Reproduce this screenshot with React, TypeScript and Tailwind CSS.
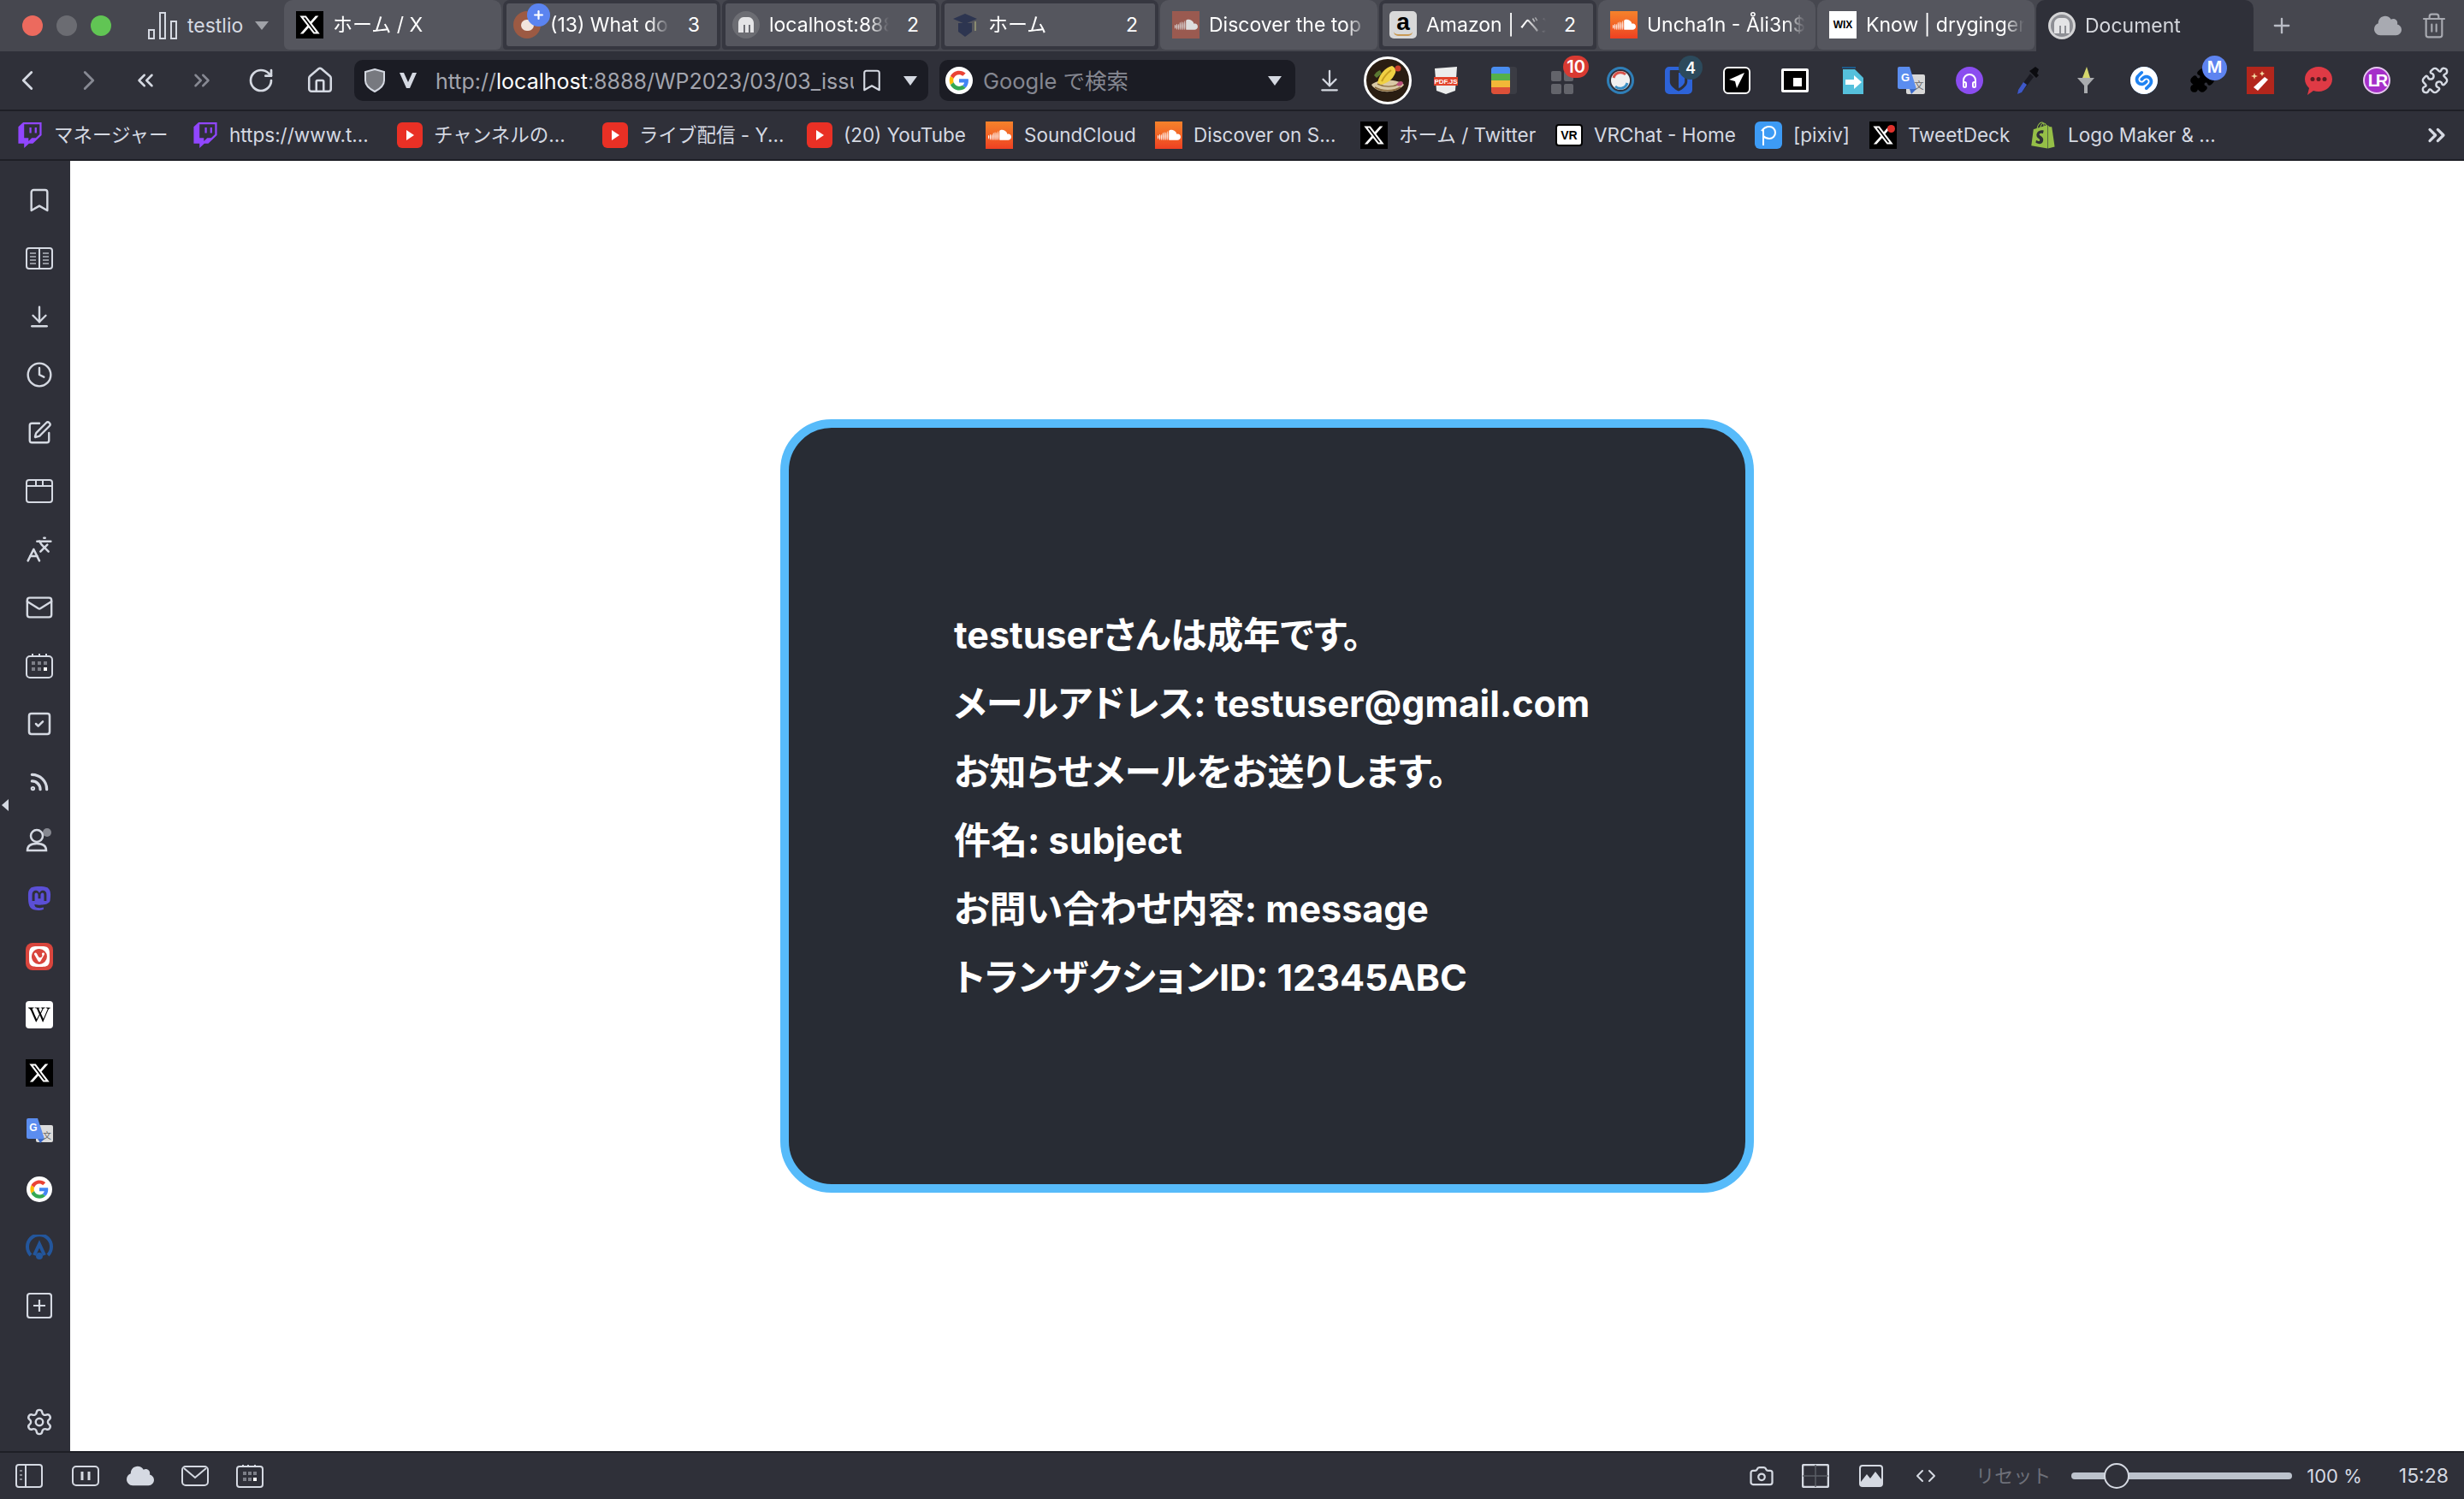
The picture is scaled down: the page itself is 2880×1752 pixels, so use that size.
import React from 'react';
import {
  ChevronLeft, ChevronRight, ChevronsLeft, ChevronsRight, RotateCw, House, Bookmark, Clock, Mail, Rss,
  Plus, Trash2, Puzzle, Settings, SquarePen, SquareCheck, Camera, Code, ChevronsRight as More, ArrowDownToLine, Languages,
} from 'lucide-react';
import { FaXTwitter, FaTwitch, FaSoundcloud, FaMastodon, FaWikipediaW, FaShopify, FaCloud } from 'react-icons/fa6';
import { SiShazam, SiVivaldi, SiBitwarden } from 'react-icons/si';

const G = ({ size = 32 }: { size?: number }) => (
  <svg width={size} height={size} viewBox="0 0 48 48">
    <circle cx="24" cy="24" r="24" fill="#fff" />
    <g transform="translate(7 7) scale(0.71)">
      <path fill="#EA4335" d="M24 9.5c3.5 0 6.7 1.2 9.2 3.6l6.9-6.9C35.9 2.4 30.5 0 24 0 14.6 0 6.5 5.4 2.6 13.2l8 6.2C12.5 13.7 17.800 9.500 24 9.500z" />
      <path fill="#4285F4" d="M47 24.500c0-1.600-.1-3.100-.4-4.500H24v9h12.900c-.6 3-2.200 5.500-4.700 7.200l7.700 6c4.500-4.200 7.100-10.300 7.100-17.700z" />
      <path fill="#FBBC05" d="M10.500 28.600c-.5-1.500-.8-3-.8-4.600s.3-3.100.8-4.600l-8-6.200C.9 16.400 0 20.100 0 24s.9 7.600 2.600 10.800l7.900-6.200z" />
      <path fill="#34A853" d="M24 48c6.500 0 11.900-2.100 15.900-5.800l-7.700-6c-2.200 1.400-4.900 2.300-8.200 2.300-6.200 0-11.500-4.200-13.400-9.900l-8 6.200C6.500 42.600 14.600 48 24 48z" />
    </g>
  </svg>
);

const XBox = ({ dot = false }: { dot?: boolean }) => (
  <div className="relative w-[32px] h-[32px] bg-black flex items-center justify-center shrink-0">
    <FaXTwitter size={26} color="#fff" />
    {dot && <div className="absolute top-[4px] right-[2px] w-[9px] h-[9px] rounded-full bg-[#e0312c]" />}
  </div>
);

const ScBox = ({ dim = false }: { dim?: boolean }) => (
  <div className={`w-[32px] h-[32px] flex items-center justify-center shrink-0 ${dim ? 'bg-[#9a5a50]' : 'bg-gradient-to-b from-[#f5822b] to-[#ee3f22]'}`}>
    <FaSoundcloud size={27} color={dim ? '#ddd' : '#fff'} />
  </div>
);

const YtBox = () => (
  <div className="w-[30px] h-[30px] rounded-[6px] bg-[#e93025] flex items-center justify-center shrink-0">
    <div className="w-0 h-0 border-y-[6px] border-y-transparent border-l-[9px] border-l-white" />
  </div>
);

const TwitchBox = () => <FaTwitch size={30} color="#9146ff" className="shrink-0" />;

const ElephantFav = ({ ring = false }: { ring?: boolean }) => (
  <div className={`w-[32px] h-[32px] rounded-full flex items-center justify-center shrink-0 ${ring ? 'bg-[#8d8e94] border-[3px] border-[#d4d4d6]' : 'bg-[#6c6d73]'}`}>
    <svg width="20" height="18" viewBox="0 0 20 18" fill="#e4e4e6">
      <path d="M1 18V7c0-4 3-7 6-7h6c3 0 6 3 6 7v11h-4V9h-2v9H9V9H7v9z" />
    </svg>
  </div>
);

const tabs = [
  { kind: 'single', title: 'ホーム / X', icon: <XBox /> },
  {
    kind: 'stack', title: '(13) What do', count: 3,
    icon: (
      <div className="relative w-[32px] h-[32px] shrink-0">
        <div className="absolute inset-0 rounded-full bg-[#9c5a43] flex items-center justify-center">
          <div className="w-[15px] h-[13px] rounded-full bg-[#f2e5dc]" />
        </div>
        <div className="absolute -top-[9px] left-[16px] w-[27px] h-[27px] rounded-full bg-[#5b84f0] flex items-center justify-center">
          <Plus size={15} color="#fff" strokeWidth={3.5} />
        </div>
      </div>
    ),
  },
  { kind: 'stack', title: 'localhost:888', count: 2, icon: <ElephantFav /> },
  {
    kind: 'stack', title: 'ホーム', count: 2,
    icon: (
      <svg width="32" height="32" viewBox="0 0 32 32" className="shrink-0">
        <path d="M2 9 16 3l14 6-14 6z" fill="#2d3550" />
        <path d="M8 14h16v10l-8 6-8-6z" fill="#2d3550" />
        <rect x="27" y="12" width="2" height="11" fill="#8a8b70" />
      </svg>
    ),
  },
  { kind: 'single', title: 'Discover the top s', icon: <ScBox dim /> },
  {
    kind: 'stack', title: 'Amazon | ベン', count: 2,
    icon: (
      <div className="relative w-[32px] h-[32px] rounded-[5px] bg-[#d9d9d9] flex items-center justify-center shrink-0">
        <span className="text-[28px] leading-none font-bold text-black font-['Liberation_Sans'] -mt-[6px]">a</span>
        <div className="absolute bottom-[3px] left-[5px] w-[22px] h-[5px] rounded-b-full border-b-2 border-[#c99a55]" />
      </div>
    ),
  },
  { kind: 'single', title: 'Uncha1n - Åli3n$', icon: <ScBox /> },
  {
    kind: 'single', title: 'Know | dryginger',
    icon: (
      <div className="w-[32px] h-[32px] bg-white flex items-center justify-center shrink-0">
        <span className="text-[12px] font-bold text-black font-['Liberation_Sans']">WIX</span>
      </div>
    ),
  },
  { kind: 'active', title: 'Document', icon: <ElephantFav ring /> },
];

const TabTitle = ({ children, dim = false }: { children: React.ReactNode; dim?: boolean }) => (
  <div className={`flex-1 min-w-0 overflow-hidden whitespace-nowrap text-[23px] leading-[30px] [mask-image:linear-gradient(to_left,transparent,black_24px)] ${dim ? 'text-[#d5d7dd]' : 'text-white'}`}>
    {children}
  </div>
);

const TabBar = () => (
  <div className="h-[60px] bg-[#46474f] flex shrink-0">
    <div className="w-[332px] flex items-center shrink-0 pl-[26px]">
      <div className="w-[24px] h-[24px] rounded-full bg-[#ec6a5e]" />
      <div className="w-[24px] h-[24px] rounded-full bg-[#6b6c72] ml-[16px]" />
      <div className="w-[24px] h-[24px] rounded-full bg-[#61c554] ml-[16px]" />
      <svg width="34" height="32" viewBox="0 0 34 32" className="ml-[43px]" fill="none" stroke="#d5d9e2" strokeWidth="2">
        <rect x="1" y="21" width="6" height="10" />
        <rect x="14" y="1" width="6" height="30" />
        <rect x="27" y="11" width="6" height="20" />
      </svg>
      <span className="ml-[12px] text-[23px] text-[#d5d9e2]">testlio</span>
      <div className="ml-[14px] w-0 h-0 border-x-[8px] border-x-transparent border-t-[10px] border-t-[#a0a2a8]" />
    </div>
    <div className="flex gap-[2px]">
      {tabs.map((tab) => {
        if (tab.kind === 'stack') {
          return (
            <div key={tab.title} className="w-[254px] h-[58px] bg-[#363740] rounded-t-[8px] rounded-b-[4px] p-[4px] shrink-0">
              <div className="h-full bg-[#55565e] rounded-[3px] flex items-center pl-[8px] pr-[20px] gap-[11px]">
                {tab.icon}
                <TabTitle>{tab.title}</TabTitle>
                <span className="text-[23px] text-white w-[20px] text-right ml-[4px]">{tab.count}</span>
              </div>
            </div>
          );
        }
        const active = tab.kind === 'active';
        return (
          <div
            key={tab.title}
            className={`w-[254px] rounded-t-[10px] flex items-center pl-[14px] pr-[12px] gap-[11px] shrink-0 ${active ? 'h-[60px] bg-[#2f3039]' : 'h-[58px] bg-[#55565e] rounded-b-[6px]'}`}
          >
            {tab.icon}
            <TabTitle dim={active}>{tab.title}</TabTitle>
          </div>
        );
      })}
    </div>
    <div className="flex-1 flex items-center">
      <Plus size={28} color="#b9bcc5" strokeWidth={2} className="ml-[19px]" />
      <FaCloud size={32} color="#a8aab1" className="ml-[94px]" />
      <Trash2 size={32} color="#a8aab1" strokeWidth={1.6} className="ml-[22px]" />
    </div>
  </div>
);

const Ext = ({ children }: { children: React.ReactNode }) => (
  <div className="w-[68px] h-full flex items-center justify-center relative shrink-0">{children}</div>
);

const Badge = ({ color, text }: { color: string; text: string }) => (
  <div className={`absolute top-[5px] left-[35px] w-[30px] h-[26px] rounded-full flex items-center justify-center text-[20px] font-semibold text-white ${color}`}>
    {text}
  </div>
);

const Extensions = () => (
  <div className="flex h-full">
    <Ext><ArrowDownToLine size={30} color="#d5d9e2" strokeWidth={1.8} /></Ext>
    <Ext>
      <svg width="56" height="56" viewBox="0 0 56 56">
        <circle cx="28" cy="28" r="26.500" fill="#2a1d12" stroke="#fff" strokeWidth="3" />
        <path d="M9 33c6 11 30 11 38 0-4-6-30-8-38 0z" fill="#d9c9a6" />
        <path d="M13 36c8 5 22 5 30 0M16 32c8 4 18 4 26 0" stroke="#8a6b3e" strokeWidth="1.500" fill="none" />
        <path d="M16 31c2-10 9-18 17-20 4 2 5 5 4 8-3 8-9 12-17 14z" fill="#f0d143" />
        <path d="M21 29c3-6 7-10 11-13" stroke="#c79f20" strokeWidth="2" fill="none" />
        <circle cx="40" cy="14" r="3.500" fill="#c8402c" />
        <path d="M38 33c3-5 7-5 8-2-1 3-4 5-8 2z" fill="#b9507a" />
        <path d="M12 22c2-3 4-5 7-6l2 4-6 5z" fill="#5b7a33" />
      </svg>
    </Ext>
    <Ext>
      <svg width="28" height="32" viewBox="0 0 28 32">
        <path d="M1 2 27 0l-2 28-11 4-11-4z" fill="#eceded" />
        <rect x="0" y="12" width="28" height="10" fill="#e2432b" />
        <text x="14" y="20" fontSize="8" fontWeight="700" fill="#fff" textAnchor="middle" fontFamily="Liberation Sans">PDF.JS</text>
      </svg>
    </Ext>
    <Ext>
      <div className="w-[30px] h-[32px] rounded-[3px] bg-[#3b3c44] overflow-hidden">
        <div className="w-[22px] h-full flex flex-col overflow-hidden rounded-[3px]">
          <div className="flex-1 bg-[#4a8df0]" />
          <div className="flex-1 bg-[#55b04a]" />
          <div className="flex-1 bg-[#f2b838]" />
          <div className="flex-1 bg-[#dd5038]" />
        </div>
      </div>
    </Ext>
    <Ext>
      <div className="grid grid-cols-2 gap-[3px] w-[26px] mt-[4px]">
        <div className="h-[12px] rounded-[2px] bg-[#63646b]" />
        <div className="h-[12px] rounded-[2px] bg-[#63646b]" />
        <div className="h-[12px] rounded-[2px] bg-[#63646b]" />
        <div className="h-[12px] rounded-[2px] bg-[#63646b]" />
      </div>
      <Badge color="bg-[#d93a32]" text="10" />
    </Ext>
    <Ext>
      <svg width="32" height="32" viewBox="0 0 32 32" fill="none">
        <circle cx="16" cy="16" r="14.500" stroke="#2f7fb8" strokeWidth="3" />
        <circle cx="16" cy="16" r="11" fill="#f0f0f0" />
        <path d="M8 13a8.500 8.500 0 0 1 14-4" stroke="#d9534a" strokeWidth="3" />
        <path d="M24 19a8.500 8.500 0 0 1-14 4" stroke="#3a8fc5" strokeWidth="3" />
      </svg>
    </Ext>
    <Ext>
      <SiBitwarden size={32} color="#2d63d8" />
      <div className="absolute top-[5px] left-[34px] w-[28px] h-[28px] rounded-full bg-[#2c4a5c] flex items-center justify-center text-[18px] font-semibold text-white">4</div>
    </Ext>
    <Ext>
      <div className="w-[32px] h-[32px] rounded-[6px] bg-black border-[2px] border-white flex items-center justify-center">
        <svg width="20" height="20" viewBox="0 0 20 20"><path d="M19 1 1 9l7 2 2 8z" fill="#fff" /></svg>
      </div>
    </Ext>
    <Ext>
      <div className="w-[32px] h-[28px] bg-black border-[3px] border-white rounded-[2px] flex items-center justify-center">
        <div className="w-[10px] h-[10px] bg-white ml-[6px] mt-[4px]" />
      </div>
    </Ext>
    <Ext>
      <svg width="30" height="32" viewBox="0 0 30 32">
        <path d="M2 0h16v2H2z" fill="#1d5a8a" />
        <path d="M3 3h14l10 10v19H3z" fill="#55c0dc" />
        <path d="M6 15h10v-5l9 8-9 8v-5H6z" fill="#fff" />
      </svg>
    </Ext>
    <Ext>
      <svg width="32" height="32" viewBox="0 0 32 32">
        <rect x="10" y="9" width="22" height="23" rx="2" fill="#d8d8d8" />
        <path d="M0 2a2 2 0 0 1 2-2h12l8 26H2a2 2 0 0 1-2-2z" fill="#5b8def" />
        <path d="M14 26h8l-6 6z" fill="#3b69c9" />
        <text x="9" y="17" fontSize="13" fontWeight="700" fill="#fff" textAnchor="middle" fontFamily="Liberation Sans">G</text>
        <text x="25" y="26" fontSize="11" fill="#666" textAnchor="middle" fontFamily="Noto Sans CJK SC">文</text>
      </svg>
    </Ext>
    <Ext>
      <div className="w-[32px] h-[32px] rounded-full bg-[#8b4df0] flex items-center justify-center">
        <svg width="20" height="20" viewBox="0 0 20 20" fill="none" stroke="#fff" strokeWidth="2">
          <path d="M3 13V10a7 7 0 0 1 14 0v3" />
          <rect x="3" y="12" width="3" height="6" rx="1.500" />
          <rect x="14" y="12" width="3" height="6" rx="1.500" />
        </svg>
      </div>
    </Ext>
    <Ext>
      <svg width="28" height="32" viewBox="0 0 28 32">
        <path d="M17 8 3 27l-1 5 5-2L21 12z" fill="#1a1a22" />
        <path d="M9 18 3 27l-1 5 5-2 6-9z" fill="#3e58c9" />
        <path d="M16 5l8 8 3-3-2-2 2-5-4-3-4 3z" fill="#0b0b0f" />
      </svg>
    </Ext>
    <Ext>
      <svg width="24" height="32" viewBox="0 0 24 32">
        <path d="M2 13h20l-8 9v9h-4v-9z" fill="#a9abae" />
        <path d="M8 13 13 0l4 13z" fill="#d4d66c" />
      </svg>
    </Ext>
    <Ext>
      <div className="w-[32px] h-[32px] rounded-full bg-[#1f83f2] flex items-center justify-center">
        <SiShazam size={32} color="#fff" />
      </div>
    </Ext>
    <Ext>
      <Puzzle size={30} color="#000" fill="#000" />
      <div className="absolute top-[5px] left-[34px] w-[29px] h-[29px] rounded-full bg-[#5e84f0] flex items-center justify-center text-[19px] font-semibold text-white">M</div>
    </Ext>
    <Ext>
      <div className="w-[32px] h-[32px] bg-[#b3261c] flex items-center justify-center">
        <svg width="26" height="26" viewBox="0 0 26 26">
          <path d="M18 9l4 3-12 13-5-4z" fill="#fff" />
          <path d="M6 4l1 3 3 1-3 1-1 3-1-3-3-1 3-1zM15 2l1 2 2 1-2 1-1 2-1-2-2-1 2-1z" fill="#f3d9a0" />
        </svg>
      </div>
    </Ext>
    <Ext>
      <svg width="32" height="34" viewBox="0 0 32 34">
        <path d="M16 1c9 0 16 6.500 16 14.500S25 30 16 30c-2 0-4-.3-6-1l-7 5 2-8C2 23 0 19.500 0 15.500 0 7.500 7 1 16 1z" fill="#df3a45" />
        <circle cx="9" cy="15.500" r="2.500" fill="#5a1d22" /><circle cx="16" cy="15.500" r="2.500" fill="#5a1d22" /><circle cx="23" cy="15.500" r="2.500" fill="#5a1d22" />
      </svg>
    </Ext>
    <Ext>
      <div className="w-[32px] h-[32px] rounded-full bg-[#a62fc9] border-[2px] border-[#e5c7ef] flex items-center justify-center text-[20px] font-bold text-white font-['Liberation_Sans'] tracking-[-3px]">LR</div>
    </Ext>
    <Ext><Puzzle size={34} color="#d5d9e2" strokeWidth={1.7} /></Ext>
  </div>
);

const DownCaret = ({ color = 'border-t-[#d5d9e2]' }: { color?: string }) => (
  <div className={`w-0 h-0 border-x-[8px] border-x-transparent border-t-[11px] ${color}`} />
);

const ToolBar = () => (
  <div className="h-[68px] bg-[#2f3039] flex items-center shrink-0">
    <div className="w-[414px] flex items-center shrink-0">
      <ChevronLeft size={38} color="#d5d9e2" strokeWidth={1.8} className="ml-[13px]" />
      <ChevronRight size={38} color="#878993" strokeWidth={1.8} className="ml-[34px]" />
      <ChevronsLeft size={30} color="#d5d9e2" strokeWidth={2} className="ml-[32px]" />
      <ChevronsRight size={30} color="#878993" strokeWidth={2} className="ml-[36px]" />
      <RotateCw size={32} color="#d5d9e2" strokeWidth={2} className="ml-[38px]" />
      <House size={34} color="#d5d9e2" strokeWidth={1.8} className="ml-[36px]" />
    </div>
    <div className="w-[671px] h-[48px] rounded-[10px] bg-[#1b1c24] flex items-center shrink-0">
      <svg width="24" height="28" viewBox="0 0 24 28" className="ml-[12px] shrink-0">
        <path d="M12 1 23 4v10c0 6-5 10-11 13C6 24 1 20 1 14V4z" fill="#77797f" stroke="#d5d9e2" strokeWidth="2" />
      </svg>
      <svg width="22" height="20" viewBox="0 0 22 20" className="ml-[16px] shrink-0">
        <path d="M1 1h5l5 11 5-11h5l-8 18h-4z" fill="#d5d9e2" />
      </svg>
      <div className="ml-[21px] mt-[2px] w-[489px] overflow-hidden whitespace-nowrap text-[25px] leading-[30px] text-[#a2a4ad]">
        http://<span className="text-white">localhost</span>:8888/WP2023/03/03_issue
      </div>
      <Bookmark size={30} color="#d5d9e2" strokeWidth={1.7} className="ml-[6px] shrink-0" />
      <div className="ml-[22px]"><DownCaret /></div>
    </div>
    <div className="w-[416px] ml-[13px] h-[48px] rounded-[10px] bg-[#1b1c24] flex items-center pl-[7px] pr-[16px] shrink-0">
      <G />
      <span className="ml-[12px] mt-[2px] text-[25.5px] leading-[30px] text-[#858791] flex-1">Google で検索</span>
      <DownCaret />
    </div>
    <div className="ml-[6px] h-full"><Extensions /></div>
  </div>
);

const bookmarks = [
  { title: 'マネージャー', icon: <TwitchBox />, width: 'w-[205px]' },
  { title: 'https://www.t...', icon: <TwitchBox />, width: 'w-[239px]' },
  { title: 'チャンネルの...', icon: <YtBox />, width: 'w-[240px]' },
  { title: 'ライブ配信 - Y...', icon: <YtBox />, width: 'w-[239px]' },
  { title: '(20) YouTube', icon: <YtBox />, width: 'w-[209px]' },
  { title: 'SoundCloud', icon: <ScBox />, width: 'w-[198px]' },
  { title: 'Discover on S...', icon: <ScBox />, width: 'w-[240px]' },
  { title: 'ホーム / Twitter', icon: <XBox />, width: 'w-[228px]' },
  {
    title: 'VRChat - Home',
    icon: (
      <div className="w-[32px] h-[26px] bg-white border-2 border-black rounded-[4px] flex items-center justify-center text-[14px] font-bold text-black font-['Liberation_Sans'] shrink-0">VR</div>
    ),
    width: 'w-[233px]',
  },
  {
    title: '[pixiv]',
    icon: (
      <div className="w-[32px] h-[32px] rounded-[6px] bg-[#3d9bf5] flex items-center justify-center shrink-0">
        <svg width="22" height="26" viewBox="0 0 22 26" fill="none" stroke="#fff" strokeWidth="2"><path d="M5 25V6M3 8c3-4 6-5 9-5 4 0 7 3 7 7s-3 7-7 7c-3 0-5-1-7-3" /></svg>
      </div>
    ),
    width: 'w-[134px]',
  },
  { title: 'TweetDeck', icon: <XBox dot />, width: 'w-[187px]' },
  { title: 'Logo Maker & ...', icon: <FaShopify size={32} color="#95bf47" className="shrink-0" />, width: 'w-[240px]' },
];

const BookmarkBar = () => (
  <div className="h-[56px] bg-[#2f3039] border-y-[2px] border-[#1e1f26] flex items-center pl-[20px] pr-[16px] shrink-0 box-content">
    {bookmarks.map((b) => (
      <div key={b.title} className={`flex items-center gap-[13px] shrink-0 ${b.width}`}>
        {b.icon}
        <span className="text-[22.5px] text-[#d5d9e2] whitespace-nowrap leading-[28px]">{b.title}</span>
      </div>
    ))}
    <More size={32} color="#d5d9e2" strokeWidth={2.4} className="ml-auto" />
  </div>
);

const icon = '#d5d9e2';

const SideIcon = ({ children }: { children: React.ReactNode }) => (
  <div className="h-[68px] flex items-center justify-center">{children}</div>
);

const Sidebar = () => (
  <div className="relative w-[82px] bg-[#2f3039] flex flex-col pt-[12px] pl-[10px] shrink-0">
    <SideIcon><Bookmark size={32} color={icon} strokeWidth={1.8} /></SideIcon>
    <SideIcon>
      <svg width="32" height="26" viewBox="0 0 32 26" fill="none" stroke={icon} strokeWidth="2">
        <rect x="1" y="1" width="30" height="24" rx="3" /><path d="M16 1v24" />
        <path d="M5 7h7M5 11h7M5 15h7M5 19h7M20 7h7M20 11h7M20 15h7M20 19h7" strokeOpacity=".6" />
      </svg>
    </SideIcon>
    <SideIcon><ArrowDownToLine size={30} color={icon} strokeWidth={1.9} /></SideIcon>
    <SideIcon><Clock size={32} color={icon} strokeWidth={1.8} /></SideIcon>
    <SideIcon><SquarePen size={30} color={icon} strokeWidth={1.9} /></SideIcon>
    <SideIcon>
      <svg width="32" height="28" viewBox="0 0 32 28" fill="none" stroke={icon} strokeWidth="2">
        <rect x="1" y="1" width="30" height="26" rx="3" /><path d="M1 8h30M12 1v7M20 1v7" />
      </svg>
    </SideIcon>
    <SideIcon><Languages size={32} color={icon} strokeWidth={1.9} className="-scale-x-100" /></SideIcon>
    <SideIcon><Mail size={34} color={icon} strokeWidth={1.7} /></SideIcon>
    <SideIcon>
      <svg width="32" height="30" viewBox="0 0 32 30" fill="none" stroke={icon} strokeWidth="2">
        <rect x="1" y="4" width="30" height="25" rx="4" />
        <path d="M8 1v3M16 1v3M24 1v3" />
        <path d="M7 12h4M14 12h4M21 12h4M7 19h4M14 19h4" stroke="#7c7e87" strokeWidth="4" />
        <path d="M21 19h4" stroke="#fff" strokeWidth="4" />
      </svg>
    </SideIcon>
    <SideIcon><SquareCheck size={32} color={icon} strokeWidth={1.9} /></SideIcon>
    <SideIcon><Rss size={26} color={icon} strokeWidth={3} /></SideIcon>
    <SideIcon>
      <svg width="32" height="32" viewBox="0 0 32 32" fill="none">
        <circle cx="25" cy="7" r="5" fill="#85878f" />
        <circle cx="13" cy="11" r="7" stroke={icon} strokeWidth="2.500" />
        <path d="M2 28c0-5 4-8 11-8s11 3 11 8z" stroke={icon} strokeWidth="2.500" />
      </svg>
    </SideIcon>
    <SideIcon><FaMastodon size={32} color="#5b4fd6" /></SideIcon>
    <SideIcon>
      <div className="w-[32px] h-[32px] rounded-[8px] bg-[#d9453d] flex items-center justify-center">
        <SiVivaldi size={24} color="#fff" />
      </div>
    </SideIcon>
    <SideIcon>
      <div className="w-[32px] h-[32px] rounded-[4px] bg-white flex items-center justify-center">
        <FaWikipediaW size={26} color="#000" />
      </div>
    </SideIcon>
    <SideIcon><XBox /></SideIcon>
    <SideIcon>
      <svg width="32" height="30" viewBox="0 0 32 30">
        <rect x="12" y="8" width="20" height="20" rx="2" fill="#dcdcdc" />
        <path d="M1 2a2 2 0 0 1 2-2h11l8 24H3a2 2 0 0 1-2-2z" fill="#5b8def" />
        <path d="M14 24h8l-5 5z" fill="#3b69c9" />
        <text x="9" y="15" fontSize="12" fontWeight="700" fill="#fff" textAnchor="middle" fontFamily="Liberation Sans">G</text>
        <text x="25" y="24" fontSize="10" fill="#666" textAnchor="middle" fontFamily="Noto Sans CJK SC">文</text>
      </svg>
    </SideIcon>
    <SideIcon><G size={30} /></SideIcon>
    <SideIcon>
      <svg width="32" height="30" viewBox="0 0 32 30" fill="none">
        <path d="M6 24A14 14 0 1 1 26 24" stroke="#23569c" strokeWidth="4" />
        <path d="M10 24 16 11l6 13" stroke="#23569c" strokeWidth="4" />
        <circle cx="16" cy="25" r="4" fill="#23569c" />
      </svg>
    </SideIcon>
    <SideIcon>
      <svg width="30" height="30" viewBox="0 0 30 30" fill="none" stroke={icon} strokeWidth="2.200">
        <rect x="1" y="1" width="28" height="28" rx="3" /><path d="M15 8v14M8 15h14" />
      </svg>
    </SideIcon>
    <div className="flex-1 flex items-end">
      <div className="w-full"><SideIcon><Settings size={34} color={icon} strokeWidth={1.7} /></SideIcon></div>
    </div>
    <div className="absolute left-[2px] top-[746px] w-0 h-0 border-y-[7px] border-y-transparent border-r-[8px] border-r-[#d5d9e2]" />
  </div>
);

const lines = [
  'testuserさんは成年です。',
  'メールアドレス: testuser@gmail.com',
  'お知らせメールをお送りします。',
  '件名: subject',
  'お問い合わせ内容: message',
  'トランザクションID: 12345ABC',
];

const Card = () => (
  <div className="w-[1138px] h-[904px] rounded-[60px] border-[10px] border-[#57bbfa] bg-[#282c34] flex flex-col justify-center pl-[193px]">
    {lines.map((line) => (
      <p key={line} className="h-[80px] flex items-center text-[43px] font-bold text-white whitespace-nowrap [font-feature-settings:'palt'] font-['Inter','Noto_Sans_CJK_JP',sans-serif]">
        {line}
      </p>
    ))}
  </div>
);

const StatusBar = () => (
  <div className="h-[56px] bg-[#2f3039] border-t-[2px] border-[#1e1f26] flex items-center shrink-0">
    <div className="flex items-center pl-[18px]">
      <svg width="32" height="28" viewBox="0 0 32 28" fill="none" stroke={icon} strokeWidth="2">
        <rect x="1" y="1" width="30" height="26" rx="3" /><path d="M12 1v26" /><path d="M5 8h3M5 13h3M5 18h3" stroke="#85878f" />
      </svg>
      <svg width="32" height="24" viewBox="0 0 32 24" fill="none" stroke={icon} strokeWidth="2" className="ml-[34px]">
        <rect x="1" y="1" width="30" height="22" rx="4" /><path d="M12 7v10M20 7v10" strokeWidth="3" />
      </svg>
      <FaCloud size={32} color={icon} className="ml-[32px]" />
      <svg width="32" height="24" viewBox="0 0 32 24" fill="none" stroke={icon} strokeWidth="2" className="ml-[32px]">
        <rect x="1" y="1" width="30" height="22" rx="4" /><path d="M3 3l13 11L29 3" />
      </svg>
      <svg width="32" height="28" viewBox="0 0 32 28" fill="none" stroke={icon} strokeWidth="2" className="ml-[32px]">
        <rect x="1" y="3" width="30" height="24" rx="3" />
        <path d="M8 1v2M14 1v2M22 1v2" />
        <path d="M8 11h4M14 11h4M20 11h4M8 18h4M14 18h4" stroke="#7c7e87" strokeWidth="4" />
        <path d="M20 18h4" stroke="#fff" strokeWidth="4" />
      </svg>
    </div>
    <div className="flex-1" />
    <div className="flex items-center pr-[18px]">
      <Camera size={30} color={icon} strokeWidth={1.8} />
      <svg width="32" height="28" viewBox="0 0 32 28" fill="none" stroke={icon} strokeWidth="2.500" className="ml-[32px]">
        <rect x="1" y="1" width="30" height="26" rx="2" /><path d="M16 1v26M1 14h30" stroke="#5b5d66" strokeWidth="1.500" />
      </svg>
      <svg width="28" height="26" viewBox="0 0 28 26" className="ml-[35px]">
        <rect x="1" y="1" width="26" height="24" rx="3" fill="none" stroke={icon} strokeWidth="2" />
        <path d="M2 24 2 20l7-9 4 5 6-8 7 9v7z" fill={icon} />
      </svg>
      <Code size={24} color={icon} strokeWidth={2} className="ml-[38px]" />
      <span className="ml-[46px] text-[22px] text-[#6e7079]">リセット</span>
      <div className="relative ml-[24px] w-[258px] h-[8px] rounded-full bg-[#bcc2cc] flex items-center">
        <div className="absolute left-[38px] w-[30px] h-[30px] rounded-full bg-[#2f3039] border-[2px] border-[#d5d9e2]" />
      </div>
      <span className="ml-[17px] text-[22px] text-[#d5d9e2] leading-[28px]">100 %</span>
      <span className="ml-[43px] text-[23px] text-[#d5d9e2] leading-[28px]">15:28</span>
    </div>
  </div>
);

export default function App() {
  return (
    <div className="w-[2880px] h-[1752px] flex flex-col overflow-hidden font-['Inter','Noto_Sans_CJK_JP',sans-serif]">
      <TabBar />
      <ToolBar />
      <BookmarkBar />
      <div className="flex-1 flex min-h-0">
        <Sidebar />
        <main className="flex-1 bg-white flex items-center justify-center">
          <Card />
        </main>
      </div>
      <StatusBar />
    </div>
  );
}
